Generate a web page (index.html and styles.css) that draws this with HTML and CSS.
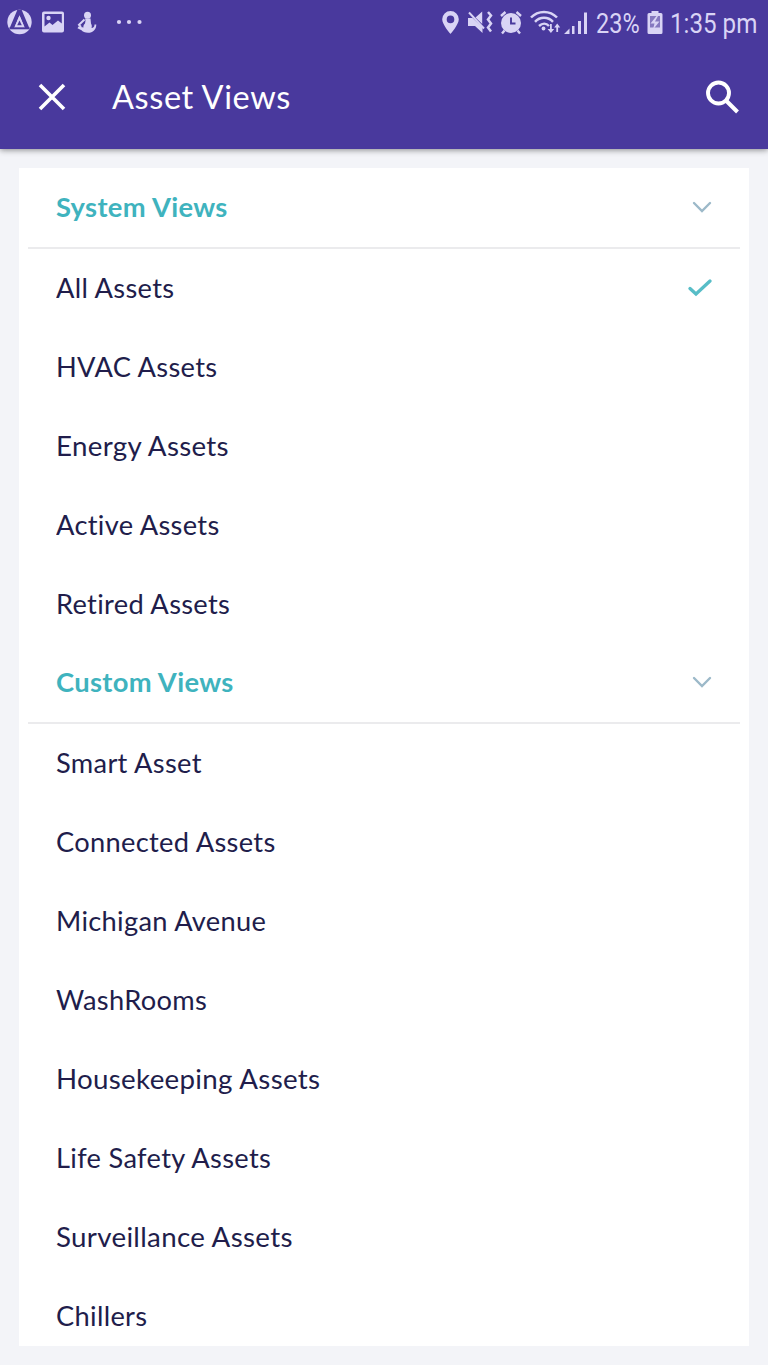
FILE: index.html
```
<!DOCTYPE html>
<html lang="en">
<head>
<meta charset="utf-8">
<title>Asset Views</title>
<link rel="stylesheet" href="styles.css">
</head>
<body>
<header class="top">
  <div class="status">
    <svg class="status-icons" width="150" height="46" viewBox="0 0 150 46" fill="#d9d4f5">
      <circle cx="19.500" cy="22" r="12.200"/>
      <path d="M17.300 10h4.400L29.500 28.500H25l-5.500-13.300L14 28.500H9.500z" fill="#49399d"/>
      <path d="M19.500 15.500l5.300 12.500h-10.600z"/>
      <path d="M19.500 20.500l2.300 4.700h-4.600z" fill="#49399d"/>
      <path d="M9.500 28.300h20" stroke="#49399d" stroke-width="2"/>
      <path fill-rule="evenodd" d="M44 11.500h18a2 2 0 0 1 2 2v17a2 2 0 0 1-2 2H44a2 2 0 0 1-2-2v-17a2 2 0 0 1 2-2zm.5 2.500v12.500l5-4 3 2.500 5.500-4.500 3.800 3V14z"/>
      <circle cx="48.500" cy="18" r="2.200"/>
      <circle cx="87.500" cy="15.200" r="3.500"/>
      <path d="M85 18.500h5.500l.5 5c1 1.500 1 3 .5 4.500 2 0 3-1.500 3-3.500h1.800c0 5-3.300 8.300-8.300 8.300-3 0-5.500-1-6.500-2.500l-4-2 1-1.800 5 1c-.5-1.500.5-3 1.500-4l.5-3z"/>
      <path d="M84.500 19.500l-5.500 5.300 2 2.200" fill="none" stroke="#d9d4f5" stroke-width="2"/>
      <circle cx="119" cy="22" r="2.100"/><circle cx="129" cy="22" r="2.100"/><circle cx="139.500" cy="22" r="2.100"/>
    </svg>
    <div class="status-right">
      <svg width="160" height="46" viewBox="436 0 160 46" fill="#d9d4f5">
        <path fill-rule="evenodd" d="M450.500 11a8.300 8.300 0 0 0-8.300 8.300c0 5.500 8.300 14.700 8.300 14.700s8.300-9.200 8.300-14.700a8.300 8.300 0 0 0-8.300-8.300zm0 4.600a3.800 3.800 0 1 1 0 7.600 3.800 3.800 0 0 1 0-7.600z"/>
        <path d="M468 18h4.500l10 9.500V33l-7.500-7h-7zM475.500 17.500l6.700-6v12.500z"/>
        <path d="M469 12.500l15 16" stroke="#d9d4f5" stroke-width="2"/>
        <path d="M488 12l3 3.500-3 4 3 4-3 4 3 4" fill="none" stroke="#d9d4f5" stroke-width="2.500"/>
        <circle cx="511" cy="23" r="10"/>
        <path d="M501 16l4.500-4M521 16l-4.500-4M504.500 30.500l-2.500 3M517.500 30.500l2.500 3" stroke="#d9d4f5" stroke-width="2.400"/>
        <path d="M511 17.500v6h4.500" fill="none" stroke="#49399d" stroke-width="1.900"/>
        <g fill="none" stroke="#d9d4f5" stroke-width="2.500"><path d="M531 17.500c7-7.500 19-7.500 26 0M535 21.800c5-5.300 13-5.300 18 0M539 26c3.300-3 7.200-3 10 0"/></g>
        <circle cx="543.500" cy="28.500" r="1.900"/>
        <path d="M550 24h1.800v5h2.400l-3.300 4-3.300-4h2.400zM556.300 32h1.800v-4.500h2.100l-3-4-3 4h2.100z"/>
        <path d="M569.500 28.500V34H564zM572 26h2.500v8H572zM578 21h3v13h-3zM584 12.500h3V34h-3z"/>
      </svg>
      <span class="percent">23%</span>
      <svg class="battery" width="16" height="46" viewBox="0 0 16 46">
        <path d="M4.500 11h7v2H14a1.500 1.500 0 0 1 1.500 1.500v18A1.500 1.500 0 0 1 14 34H2a1.500 1.500 0 0 1-1.500-1.500v-18A1.500 1.500 0 0 1 2 13h2.500z" fill="#d9d4f5"/>
        <path d="M3 16h10v11.500H3z" fill="#8578c0"/>
        <path d="M9.500 16L3.500 23.500h4l-1.500 6 6.500-8h-4.500L11 16z" fill="#d9d4f5"/>
      </svg>
      <span class="clock">1:35 pm</span>
    </div>
  </div>
  <div class="bar">
    <svg width="28" height="28" viewBox="0 0 28 28"><path d="M2 2l24 24M26 2L2 26" stroke="#fff" stroke-width="3.600"/></svg>
    <h1 class="title">Asset Views</h1>
    <svg width="36" height="36" viewBox="0 0 36 36" fill="none" stroke="#fff"><circle cx="14.500" cy="14" r="10.500" stroke-width="3.900"/><path d="M22 21.500L33.500 33" stroke-width="4"/></svg>
  </div>
</header>
<main class="card">
  <section>
    <h2 class="group"><span>System Views</span><svg width="20" height="12" viewBox="0 0 20 12"><path d="M2 2l8 8 8-8"/></svg></h2>
    <ul class="list">
      <li><span>All Assets</span><svg class="check" width="24" height="18" viewBox="0 0 24 18"><path d="M2 9.500l6 5.500L22 2"/></svg></li>
      <li><span>HVAC Assets</span></li>
      <li class="wide"><span>Energy Assets</span></li>
      <li><span>Active Assets</span></li>
      <li><span>Retired Assets</span></li>
    </ul>
  </section>
  <section>
    <h2 class="group"><span>Custom Views</span><svg width="20" height="12" viewBox="0 0 20 12"><path d="M2 2l8 8 8-8"/></svg></h2>
    <ul class="list">
      <li><span>Smart Asset</span></li>
      <li><span>Connected Assets</span></li>
      <li><span>Michigan Avenue</span></li>
      <li><span>WashRooms</span></li>
      <li class="wide"><span>Housekeeping Assets</span></li>
      <li><span>Life Safety Assets</span></li>
      <li class="wide"><span>Surveillance Assets</span></li>
      <li><span>Chillers</span></li>
    </ul>
  </section>
</main>
</body>
</html>
```
FILE: styles.css
```
* { box-sizing: border-box; margin: 0; padding: 0; }
body { height: 1365px; overflow: hidden; background: #f3f4f8; font-family: Lato, "Open Sans", sans-serif; color: #211d4b; }
svg { display: block; flex: none; }
.top { height: 149px; background: #49399d; box-shadow: 0 1px 6px rgba(0, 0, 0, .45); }
.status { height: 46px; display: flex; justify-content: space-between; }
.status-right { display: flex; padding-right: 10px; font: 27px/48px Roboto, sans-serif; color: #d9d4f5; white-space: nowrap; }
.percent { width: 44px; transform: scaleX(.87); transform-origin: left; }
.battery { margin: 0 7px 0 7px; }
.clock { width: 88px; transform: scaleX(.895); transform-origin: left; }
.bar { height: 101px; padding: 0 28px 0 38px; display: flex; align-items: center; }
.title { flex: 1; margin-left: 46px; font-size: 32.500px; line-height: 38px; font-weight: 400; letter-spacing: .6px; color: #fff; }
.card { width: 730.500px; height: 1178px; margin: 19px 0 0 18.500px; background: #fff; overflow: hidden; }
.group { height: 80.500px; margin: 0 9px; padding: 0 28px 1px; display: flex; align-items: center; justify-content: space-between; border-bottom: 2px solid #ebebed; font-size: 26px; font-weight: 700; letter-spacing: .3px; color: #3fb3be; }
.group span { transform: scaleX(1.052); transform-origin: left; }
.group path { fill: none; stroke: #9cb9c9; stroke-width: 2.400; stroke-linecap: round; }
.list { list-style: none; }
.list li { height: 79px; padding: 0 37px 1px; display: flex; align-items: center; justify-content: space-between; font-size: 26px; letter-spacing: .3px; }
.list span { transform: scaleX(1.048); transform-origin: left; }
.list .wide span { transform: scaleX(1.065); }
.check path { fill: none; stroke: #57bdc7; stroke-width: 3.300; stroke-linecap: round; }
```
